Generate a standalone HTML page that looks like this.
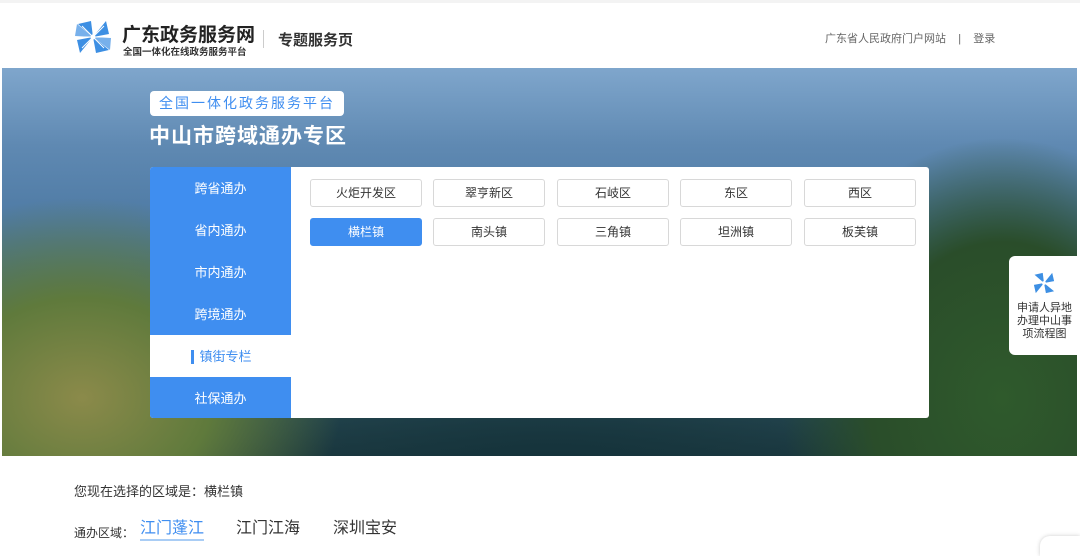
<!DOCTYPE html>
<html><head><meta charset="utf-8"><style>
*{margin:0;padding:0;box-sizing:border-box}
body{width:1080px;height:549px;overflow:hidden;background:#fff;font-family:"Liberation Sans","Noto Sans CJK SC",sans-serif;position:relative}
.hdr{position:absolute;left:0;top:0;width:1080px;height:68px;background:#fff;border-top:3px solid #f3f3f3}
.banner{position:absolute;left:2px;top:68px;width:1075px;height:388px;overflow:hidden;
background:
radial-gradient(ellipse 260px 200px at 80px 330px,#8b8a4a 0%,#5f7a3c 50%,transparent 100%),
radial-gradient(ellipse 220px 260px at 1000px 330px,#2f5a2c 0%,#2a4d2a 60%,transparent 100%),
radial-gradient(ellipse 400px 120px at 550px 400px,#14323a 0%,transparent 100%),
linear-gradient(180deg,#7fa6cc 0%,#5f89b2 20%,#4e7aa4 40%,#416d8a 60%,#2e5562 80%,#1e3b42 100%);}
.panel{position:absolute;left:150px;top:167px;width:779px;height:251px;background:#fff;border-radius:3px;overflow:hidden}
.nav{position:absolute;left:0;top:0;width:141px;height:251px;background:#3f8ef0}
.nav div{height:42px;line-height:44px;text-align:center;color:#fff;font-size:13px}
.nav .act{background:#fff;color:#3f8ef0;position:relative;padding-left:10px}
.nav .act:before{content:"";position:absolute;left:41px;top:15px;width:3px;height:14px;background:#3f8ef0}
.btn{position:absolute;width:112px;height:28px;border:1px solid #d8d8d8;border-radius:3px;font-size:12px;line-height:27px;text-align:center;color:#333;background:#fff}
.btn.on{background:#3f8ef0;border-color:#3f8ef0;color:#fff}
.side{position:absolute;left:1009px;top:256px;width:71px;height:99px;background:#fff;border-radius:6px 0 0 6px;text-align:center;font-size:11px;line-height:13px;color:#333;padding-top:46px}
</style></head><body>
<div class="hdr">
<svg style="position:absolute;left:74px;top:15px" width="38" height="38" viewBox="0 0 38 38">
<g fill="#3d8fe3"><path d="M19 19 L4 6 L17 3 Z"/><path d="M19 19 L32 3 L35 16 Z"/><path d="M19 19 L35 32 L22 35 Z"/><path d="M19 19 L6 35 L3 22 Z"/><path d="M19 19 L3 6 L1 18Z" opacity=".7"/><path d="M19 19 L36 32 L37 20Z" opacity=".7"/></g>
<g stroke="#fff" stroke-width="1"><line x1="19" y1="4" x2="19" y2="34"/><line x1="4" y1="19" x2="34" y2="19"/><line x1="8" y1="8" x2="30" y2="30"/><line x1="30" y1="8" x2="8" y2="30"/></g><circle cx="19" cy="19" r="2.5" fill="#fff"/></svg>
<div style="position:absolute;left:122px;top:17px;font-size:19px;font-weight:bold;color:#222">广东政务服务网</div>
<div style="position:absolute;left:123px;top:41px;font-size:9.5px;font-weight:bold;color:#333">全国一体化在线政务服务平台</div>
<div style="position:absolute;left:263px;top:27px;width:1px;height:18px;background:#ccc"></div>
<div style="position:absolute;left:278px;top:26px;font-size:15px;font-weight:bold;color:#333">专题服务页</div>
<div style="position:absolute;left:825px;top:27px;font-size:11px;color:#666">广东省人民政府门户网站&nbsp;&nbsp;&nbsp;&nbsp;|&nbsp;&nbsp;&nbsp;&nbsp;登录</div>
</div>
<div class="banner"></div>
<div style="position:absolute;left:150px;top:91px;width:194px;height:25px;background:#fff;border-radius:4px;font-size:14px;line-height:25px;color:#3f8ef0;text-align:center;letter-spacing:2px">全国一体化政务服务平台</div>
<div style="position:absolute;left:149px;top:120px;font-size:21px;font-weight:bold;color:#fff;letter-spacing:1px">中山市跨域通办专区</div>
<div class="panel">
<div class="nav"><div>跨省通办</div><div>省内通办</div><div>市内通办</div><div>跨境通办</div><div class="act">镇街专栏</div><div>社保通办</div></div>
<div class="btn" style="left:160px;top:12px">火炬开发区</div>
<div class="btn" style="left:283px;top:12px">翠亨新区</div>
<div class="btn" style="left:407px;top:12px">石岐区</div>
<div class="btn" style="left:530px;top:12px">东区</div>
<div class="btn" style="left:654px;top:12px">西区</div>
<div class="btn on" style="left:160px;top:51px">横栏镇</div>
<div class="btn" style="left:283px;top:51px">南头镇</div>
<div class="btn" style="left:407px;top:51px">三角镇</div>
<div class="btn" style="left:530px;top:51px">坦洲镇</div>
<div class="btn" style="left:654px;top:51px">板芙镇</div>
</div>
<div class="side">
<svg style="position:absolute;left:23px;top:15px" width="24" height="24" viewBox="0 0 38 38"><g fill="#3d8fe3"><path d="M19 19 L4 6 L17 3 Z"/><path d="M19 19 L32 3 L35 16 Z"/><path d="M19 19 L35 32 L22 35 Z"/><path d="M19 19 L6 35 L3 22 Z"/></g><circle cx="19" cy="19" r="3" fill="#fff"/></svg>
申请人异地<br>办理中山事<br>项流程图</div>
<div style="position:absolute;left:74px;top:481px;font-size:13px;color:#333">您现在选择的区域是：横栏镇</div>
<div style="position:absolute;left:74px;top:524px;font-size:12px;color:#333">通办区域：</div>
<div style="position:absolute;left:140px;top:519px;font-size:16px;color:#3f8ef0;border-bottom:2px solid #a9cdf5;line-height:20px">江门蓬江</div>
<div style="position:absolute;left:236px;top:519px;font-size:16px;color:#333;line-height:20px">江门江海</div>
<div style="position:absolute;left:333px;top:519px;font-size:16px;color:#333;line-height:20px">深圳宝安</div>
<div style="position:absolute;left:1040px;top:536px;width:40px;height:20px;background:#fff;border-radius:10px 0 0 0;box-shadow:0 0 4px #ccc"></div>
</body></html>
